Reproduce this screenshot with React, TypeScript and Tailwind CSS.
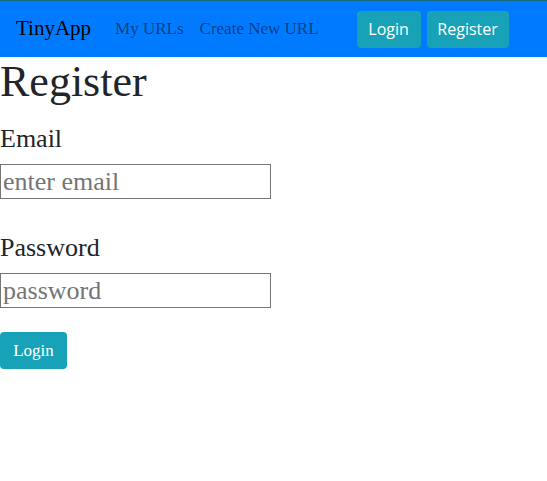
export default function App() {
  return (
    <div className="min-h-screen bg-white font-['Liberation_Serif',serif] text-[#212529]">
      <div className="h-px bg-[#17697a]" />
      <nav className="h-[56px] bg-[#007bff] flex items-center pl-4">
        <span className="text-[21px] text-black mr-6">TinyApp</span>
        <a className="text-[17px] text-black/50 mr-4">My URLs</a>
        <a className="text-[17px] text-black/50">Create New URL</a>
        <div className="ml-[38px] flex gap-[6px] font-['Open_Sans',sans-serif] text-[16px] text-white">
          <button className="h-[37px] w-[64px] rounded bg-[#17a2b8]">Login</button>
          <button className="h-[37px] w-[82px] rounded bg-[#17a2b8]">Register</button>
        </div>
      </nav>
      <h1 className="text-[44px] leading-[50px]">Register</h1>
      <form className="w-[271px]">
        <div className="mt-3">
          <label className="block text-[26px] leading-[39px]">Email</label>
          <input
            type="email"
            placeholder="enter email"
            className="mt-[6px] block w-full h-[35px] border border-[#767676] px-[2px] text-[26px] leading-none placeholder:text-[#757575] outline-none"
          />
        </div>
        <div className="mt-[29px]">
          <label className="block text-[26px] leading-[39px]">Password</label>
          <input
            type="password"
            placeholder="password"
            className="mt-[6px] block w-full h-[35px] border border-[#767676] px-[2px] text-[26px] leading-none placeholder:text-[#757575] outline-none"
          />
        </div>
        <button
          type="button"
          className="mt-6 h-[37px] w-[67px] rounded bg-[#17a2b8] text-white text-[17px]"
        >
          Login
        </button>
      </form>
    </div>
  );
}
